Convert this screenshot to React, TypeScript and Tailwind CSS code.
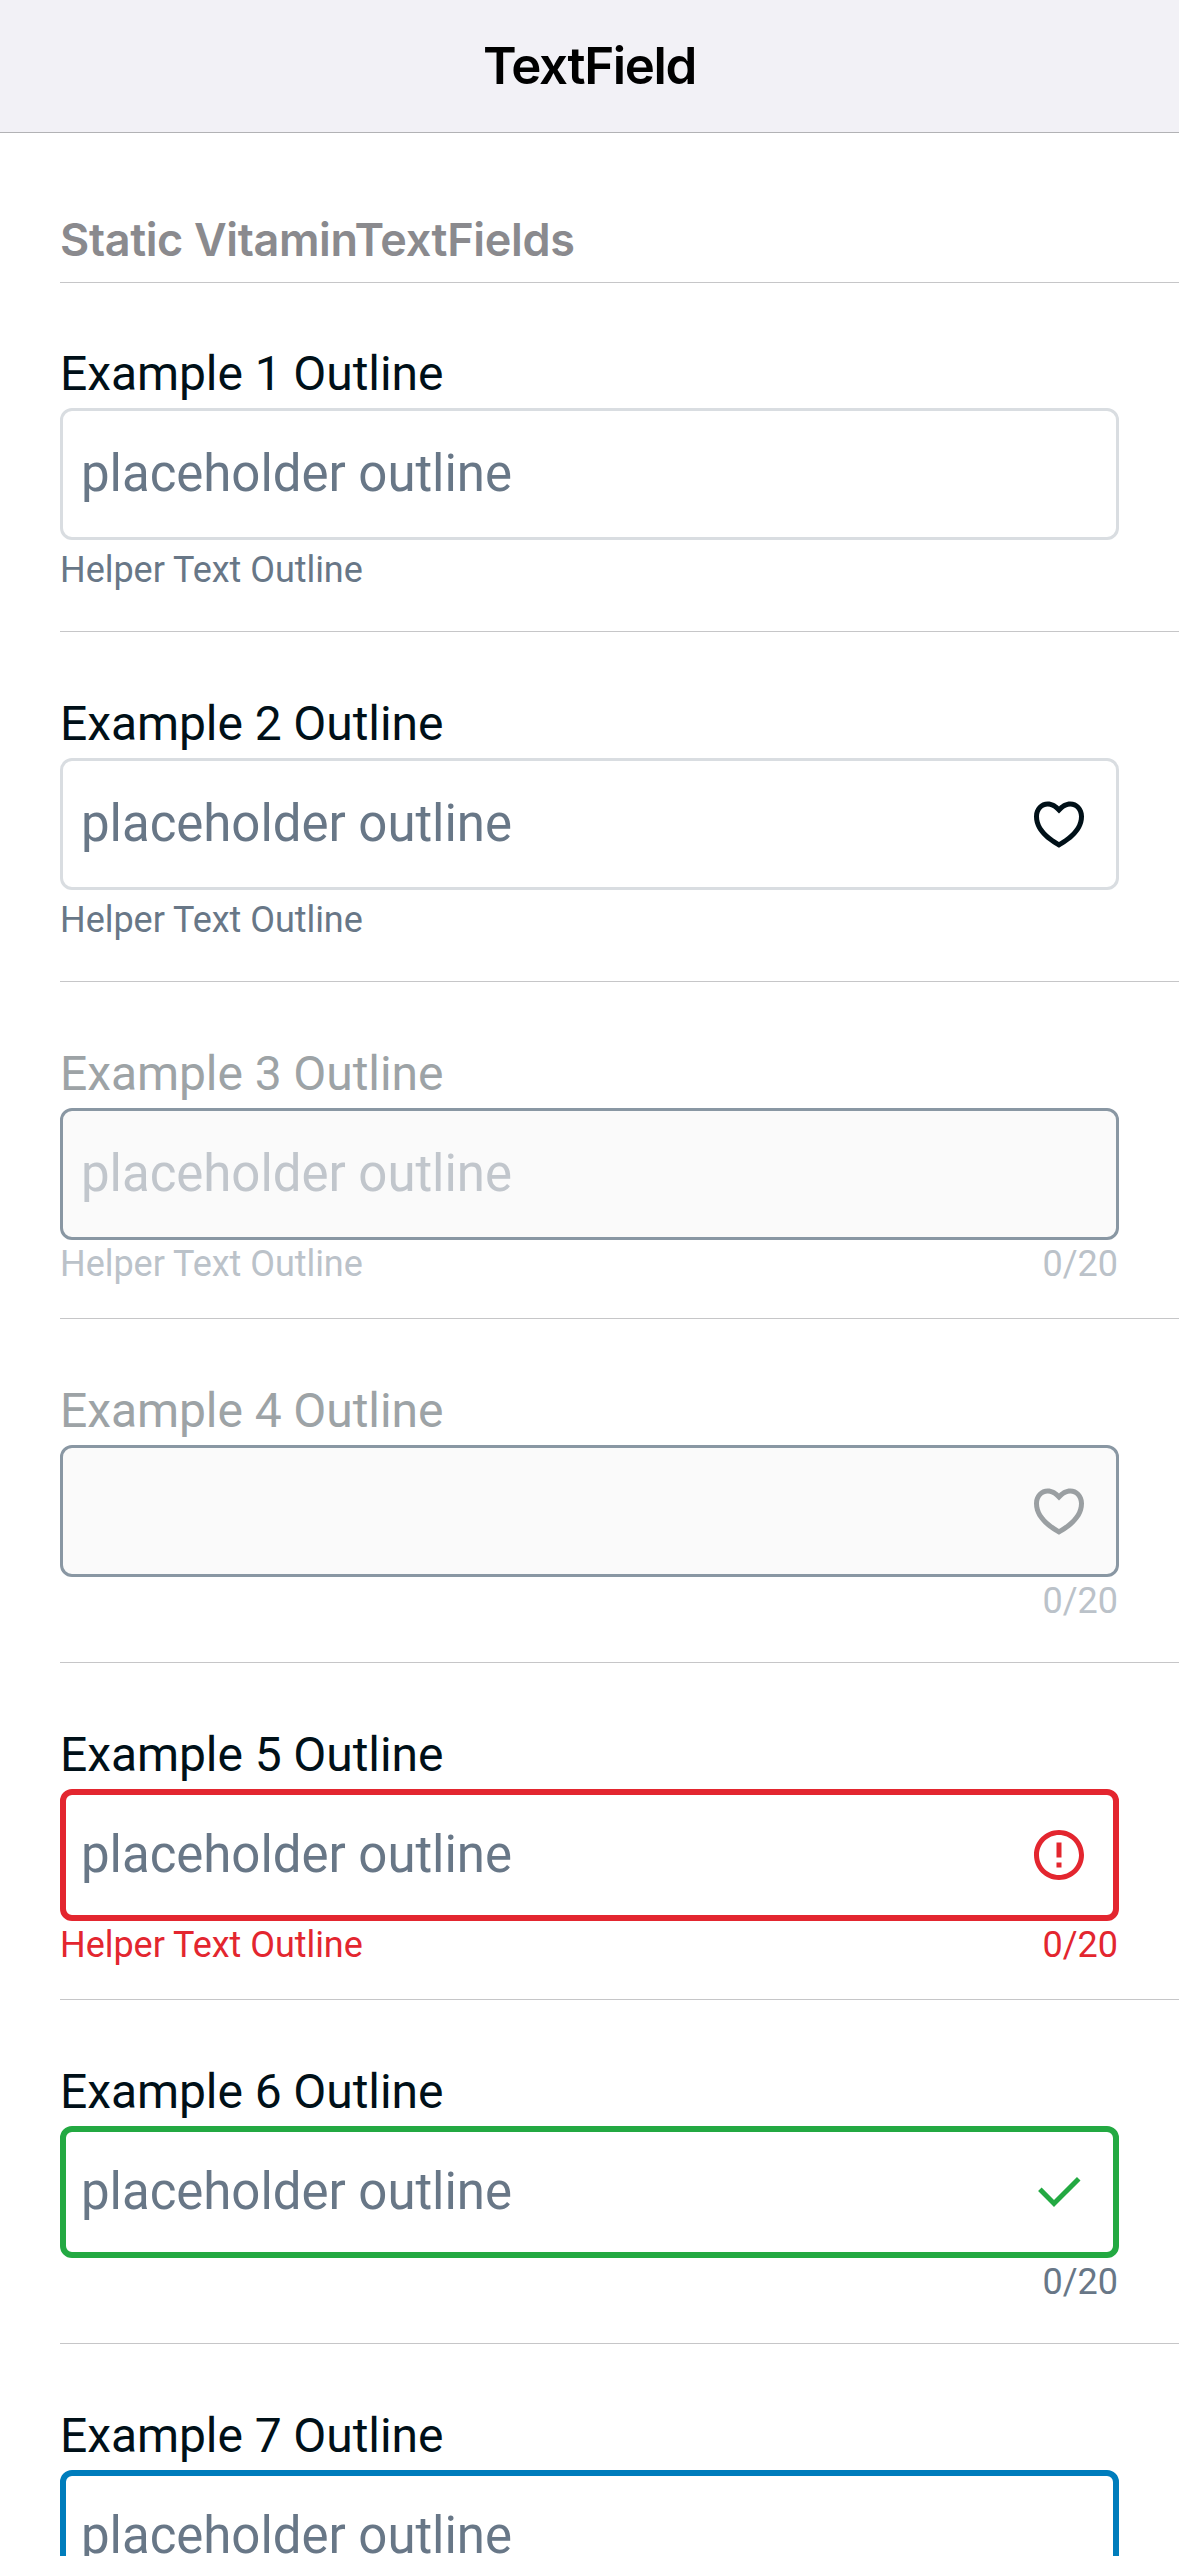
import type { ReactNode } from "react";
import { RiCheckLine, RiErrorWarningLine } from "react-icons/ri";

type FieldProps = {
  label: string;
  placeholder?: string;
  icon?: ReactNode;
  helper?: string;
  counter?: string;
  rowClass?: string;
  labelClass?: string;
  boxClass: string;
  placeholderClass?: string;
  footClass?: string;
  footSize: string;
};

function HeartIcon({ className }: { className: string }) {
  return (
    <svg viewBox="0 0 24 24" fill="currentColor" className={`size-[60px] ${className}`}>
      <path d="M16.5 3C19.538 3 22 5.5 22 9c0 7-7.5 11-10 12.5C9.5 20 2 16 2 9c0-3.5 2.5-6 5.5-6C9.36 3 11 4 12 5c1-1 2.64-2 4.5-2zm-3.566 15.604c.881-.556 1.676-1.109 2.42-1.701C18.335 14.533 20 11.943 20 9c0-2.36-1.537-4-3.5-4-1.076 0-2.24.57-3.086 1.414L12 7.828l-1.414-1.414C9.74 5.57 8.576 5 7.5 5 5.56 5 4 6.656 4 9c0 2.944 1.666 5.533 4.645 7.903.745.592 1.54 1.145 2.421 1.7.299.189.595.37.934.572.339-.202.635-.383.934-.571z" />
    </svg>
  );
}

const fields: FieldProps[] = [
  {
    label: "Example 1 Outline",
    placeholder: "placeholder outline",
    helper: "Helper Text Outline",
    rowClass: "pt-[62px]",
    boxClass: "border-[3px] border-[#d9dde1] pl-[18px] pr-[27px]",
    footSize: "h-[91px] pt-[9px]",
  },
  {
    label: "Example 2 Outline",
    placeholder: "placeholder outline",
    helper: "Helper Text Outline",
    icon: <HeartIcon className="text-[#001018]" />,
    boxClass: "border-[3px] border-[#d9dde1] pl-[18px] pr-[27px]",
    footSize: "h-[91px] pt-[9px]",
  },
  {
    label: "Example 3 Outline",
    placeholder: "placeholder outline",
    helper: "Helper Text Outline",
    counter: "0/20",
    labelClass: "text-[#9da3a6]",
    boxClass: "border-[3px] border-[#8997a3] bg-[#fafafa] pl-[18px] pr-[27px]",
    placeholderClass: "text-[#c1c6cc]",
    footClass: "text-[#bbc2c9]",
    footSize: "h-[78px] pt-[3px]",
  },
  {
    label: "Example 4 Outline",
    counter: "0/20",
    icon: <HeartIcon className="text-[#9a9fa2]" />,
    labelClass: "text-[#9da3a6]",
    boxClass: "border-[3px] border-[#8997a3] bg-[#fafafa] pl-[18px] pr-[27px]",
    footClass: "text-[#bbc2c9]",
    footSize: "h-[85px] pt-[3px]",
  },
  {
    label: "Example 5 Outline",
    placeholder: "placeholder outline",
    helper: "Helper Text Outline",
    counter: "0/20",
    icon: <RiErrorWarningLine className="size-[60px] text-[#e3262f]" />,
    boxClass: "border-[6px] border-[#e3262f] pl-[15px] pr-[24px]",
    footClass: "text-[#e3262f]",
    footSize: "h-[78px] pt-[3px]",
  },
  {
    label: "Example 6 Outline",
    placeholder: "placeholder outline",
    counter: "0/20",
    icon: <RiCheckLine className="size-[60px] text-[#23a942]" />,
    boxClass: "border-[6px] border-[#23a942] pl-[15px] pr-[24px]",
    footSize: "h-[85px] pt-[3px]",
  },
  {
    label: "Example 7 Outline",
    placeholder: "placeholder outline",
    boxClass: "border-[6px] border-[#007dbc] pl-[15px] pr-[24px]",
    footSize: "h-[85px] pt-[3px]",
  },
];

function Field({
  label,
  placeholder,
  icon,
  helper,
  counter,
  rowClass = "pt-[63px]",
  labelClass = "text-[#001018]",
  boxClass,
  placeholderClass = "text-[#687787]",
  footClass = "text-[#687787]",
  footSize,
}: FieldProps) {
  return (
    <div className={`flex flex-col border-b border-[#c6c6c8] pr-[60px] font-['Roboto',sans-serif] ${rowClass}`}>
      <div className={`h-[63px] text-[48px] leading-[57px] tracking-[-0.08px] ${labelClass}`}>{label}</div>
      <div className={`flex h-[132px] items-center justify-between rounded-[12px] ${boxClass}`}>
        <span className={`pb-px text-[51px] leading-[59px] tracking-[-0.04px] ${placeholderClass}`}>{placeholder}</span>
        {icon}
      </div>
      <div className={`flex justify-between text-[36px] leading-[42px] tracking-[-0.04px] ${footSize} ${footClass}`}>
        <span>{helper}</span>
        <span className="pr-px">{counter}</span>
      </div>
    </div>
  );
}

export default function App() {
  return (
    <div className="flex h-[2556px] w-[1179px] flex-col overflow-hidden bg-white">
      <header className="flex h-[133px] shrink-0 items-center justify-center border-b border-[#b2b2b5] bg-[#f2f1f6] font-['Inter',sans-serif]">
        <h1 className="pb-px text-[51px] leading-[61px] font-semibold tracking-[-0.027em] text-black">TextField</h1>
      </header>
      <main className="flex flex-col pl-[60px]">
        <h2 className="h-[150px] border-b border-[#c6c6c8] pt-[79px] font-['Inter',sans-serif] text-[45px] leading-[55px] font-semibold tracking-[-0.36px] text-[#8a8a8e]">
          Static VitaminTextFields
        </h2>
        {fields.map((field) => (
          <Field key={field.label} {...field} />
        ))}
      </main>
    </div>
  );
}
